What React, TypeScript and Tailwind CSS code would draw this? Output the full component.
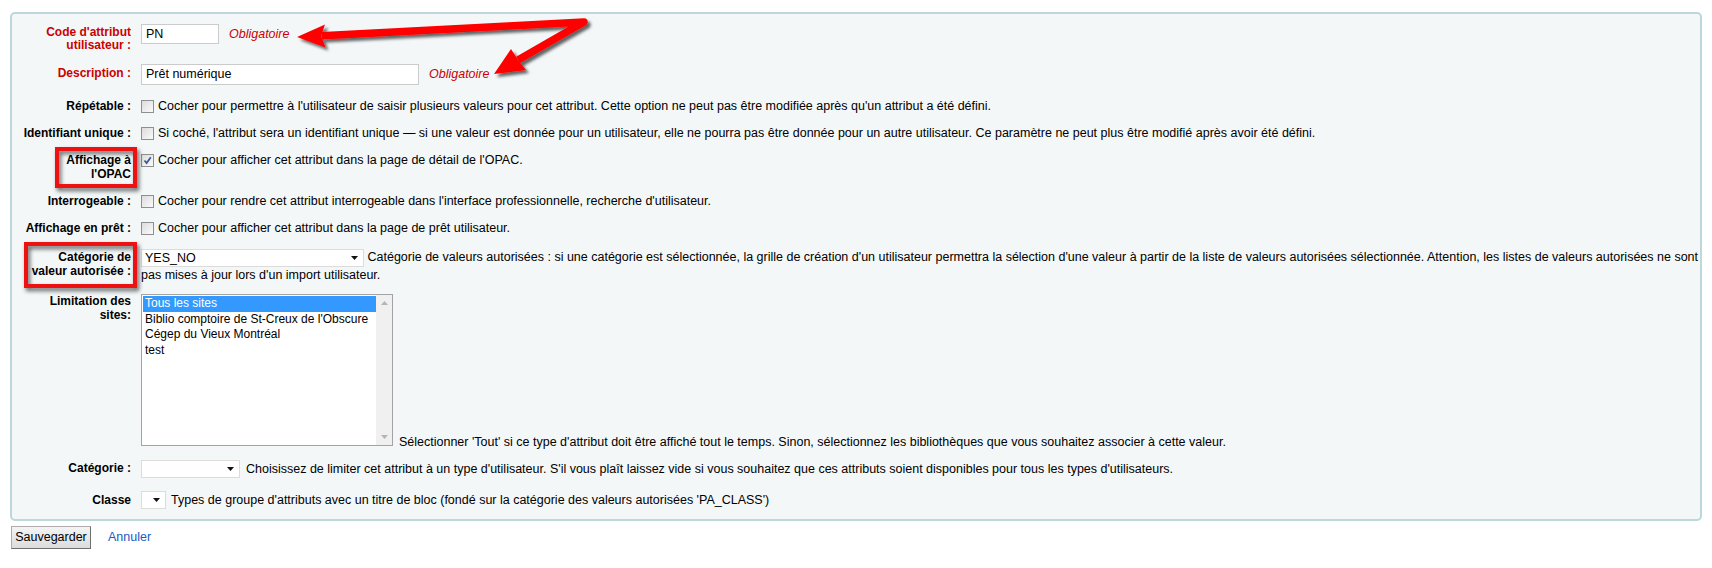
import React from 'react';

const Checkbox = ({ checked = false }: { checked?: boolean }) => (
  <span className="mr-[4px] mt-[1px] inline-flex h-[13px] w-[13px] shrink-0 items-center justify-center border border-[#8f8f8f] bg-gradient-to-br from-[#dcdcdc] to-[#fbfbfb]">
    {checked && (
      <svg width="11" height="11" viewBox="0 0 11 11">
        <path d="M2.5 5.5 L4.6 8 L8.8 2.2" fill="none" stroke="#3b5598" strokeWidth="1.7" />
      </svg>
    )}
  </span>
);

const Caret = () => (
  <svg width="7" height="4" viewBox="0 0 7 4" className="shrink-0">
    <path d="M0 0 H7 L3.5 4 Z" fill="#111" />
  </svg>
);

const FakeSelect = ({ value, width }: { value?: string; width: string }) => (
  <span
    className={`inline-flex h-[18px] items-center justify-between border border-[#dcdcdc] bg-white pl-[3px] pr-[5px] align-middle leading-[16px] text-black ${width}`}
  >
    <span>{value}</span>
    <Caret />
  </span>
);

const Label = ({ children, required = false, pt = 'pt-[2px]' }: { children: React.ReactNode; required?: boolean; pt?: string }) => (
  <label
    className={`mr-[10px] w-[108px] shrink-0 whitespace-nowrap text-right text-[12px] font-bold leading-[14px] ${pt} ${required ? 'text-[#cc0000]' : 'text-black'}`}
  >
    {children}
  </label>
);

const CheckRow = ({ label, text, checked = false }: { label: React.ReactNode; text: string; checked?: boolean }) => (
  <li className="flex pb-[11px]">
    <Label>{label}</Label>
    <div className="flex items-start pt-[2px] leading-[14px]">
      <Checkbox checked={checked} />
      <span>{text}</span>
    </div>
  </li>
);

const sites = ['Tous les sites', "Biblio comptoire de St-Creux de l'Obscure", 'Cégep du Vieux Montréal', 'test'];

export default function App() {
  return (
    <div className="relative h-[568px] w-[1712px] overflow-hidden bg-white font-['Liberation_Sans',Arial,sans-serif] text-[12.5px] text-black">
      <div className="px-[10px] pt-[12px]">
        <fieldset className="rounded-[5px] border-2 border-[#bcd8da] bg-[#f3f7f8] pl-[11px] pr-[12px] pt-[10px]">
          <ol className="list-none">
            <li className="flex pb-[12px]">
              <label className="mr-[10px] w-[108px] shrink-0 whitespace-nowrap pt-[2px] text-right text-[12px] font-bold leading-[13px] text-[#cc0000]">
                Code d'attribut
                <br />
                utilisateur :
              </label>
              <div className="flex items-center self-start">
                <span className="flex h-[20px] w-[78px] items-center border border-[#cbcbcb] bg-white pl-[4px]">PN</span>
                <span className="ml-[10px] italic text-[#cc0000]">Obligatoire</span>
              </div>
            </li>
            <li className="flex pb-[12px]">
              <Label required>Description :</Label>
              <div className="flex items-center self-start">
                <span className="flex h-[21px] w-[278px] items-center border border-[#cbcbcb] bg-white pl-[4px]">Prêt numérique</span>
                <span className="ml-[10px] italic text-[#cc0000]">Obligatoire</span>
              </div>
            </li>
            <CheckRow
              label="Répétable :"
              text="Cocher pour permettre à l'utilisateur de saisir plusieurs valeurs pour cet attribut. Cette option ne peut pas être modifiée après qu'un attribut a été défini."
            />
            <CheckRow
              label="Identifiant unique :"
              text="Si coché, l'attribut sera un identifiant unique — si une valeur est donnée pour un utilisateur, elle ne pourra pas être donnée pour un autre utilisateur. Ce paramètre ne peut plus être modifié après avoir été défini."
            />
            <CheckRow
              label={
                <>
                  Affichage à
                  <br />
                  l'OPAC
                </>
              }
              text="Cocher pour afficher cet attribut dans la page de détail de l'OPAC."
              checked
            />
            <CheckRow
              label="Interrogeable :"
              text="Cocher pour rendre cet attribut interrogeable dans l'interface professionnelle, recherche d'utilisateur."
            />
            <CheckRow
              label="Affichage en prêt :"
              text="Cocher pour afficher cet attribut dans la page de prêt utilisateur."
            />
            <li className="flex pb-[8px]">
              <Label pt="pt-[4px]">
                Catégorie de
                <br />
                valeur autorisée :
              </Label>
              <div className="mr-[-12px] flex-1 pt-[3px] leading-[17px]">
                <FakeSelect value="YES_NO" width="w-[223px]" />{' '}
                Catégorie de valeurs autorisées : si une catégorie est sélectionnée, la grille de création d'un utilisateur permettra la sélection d'une valeur à partir de la liste de valeurs autorisées sélectionnée. Attention, les listes de valeurs autorisées ne sont
                <br />
                pas mises à jour lors d'un import utilisateur.
              </div>
            </li>
            <li className="flex pb-[11px]">
              <Label>
                Limitation des
                <br />
                sites:
              </Label>
              <div className="flex items-end pt-[2px]">
                <div className="flex h-[152px] w-[252px] border border-[#a3a3a3] bg-white">
                  <div className="flex-1 whitespace-nowrap pl-[1px] pt-[1px] text-[12px] leading-[15.5px]">
                    {sites.map((s, i) => (
                      <div key={s} className={i === 0 ? 'bg-[#3399ff] pl-[2px] text-white' : 'pl-[2px]'}>
                        {s}
                      </div>
                    ))}
                  </div>
                  <div className="flex w-[16px] flex-col items-center justify-between bg-[#f0f0f0] py-[6px]">
                    <svg width="7" height="4" viewBox="0 0 7 4">
                      <path d="M0 4 H7 L3.5 0 Z" fill="#b5b5b5" />
                    </svg>
                    <svg width="7" height="4" viewBox="0 0 7 4">
                      <path d="M0 0 H7 L3.5 4 Z" fill="#b5b5b5" />
                    </svg>
                  </div>
                </div>
                <span className="mb-[-3px] ml-[6px] leading-[14px]">
                  Sélectionner 'Tout' si ce type d'attribut doit être affiché tout le temps. Sinon, sélectionnez les bibliothèques que vous souhaitez associer à cette valeur.
                </span>
              </div>
            </li>
            <li className="flex pb-[11px]">
              <Label pt="pt-[4px]">Catégorie :</Label>
              <div className="flex items-center pt-[3px]">
                <FakeSelect width="w-[99px]" />
                <span className="ml-[6px]">
                  Choisissez de limiter cet attribut à un type d'utilisateur. S'il vous plaît laissez vide si vous souhaitez que ces attributs soient disponibles pour tous les types d'utilisateurs.
                </span>
              </div>
            </li>
            <li className="flex pb-[9px]">
              <Label pt="pt-[3px]">Classe</Label>
              <div className="flex items-center pt-[1px]">
                <FakeSelect width="w-[25px]" />
                <span className="ml-[5px]">
                  Types de groupe d'attributs avec un titre de bloc (fondé sur la catégorie des valeurs autorisées 'PA_CLASS')
                </span>
              </div>
            </li>
          </ol>
        </fieldset>
      </div>

      <div className="mt-[5px] flex items-center pl-[11px]">
        <button className="h-[23px] w-[80px] border border-[#acacac] border-b-[#707070] border-r-[#707070] bg-gradient-to-b from-[#f4f4f4] to-[#dcdcdc] text-[12.5px] text-black">
          Sauvegarder
        </button>
        <a className="ml-[17px] text-[#1a5cbf]">Annuler</a>
      </div>

      {/* annotations drawn over the screenshot */}
      <div className="pointer-events-none absolute inset-0">
        <div className="absolute left-[55px] top-[147px] h-[41px] w-[82px] border-4 border-[#ee1111] [filter:drop-shadow(2px_3px_2px_rgba(0,0,0,0.6))]" />
        <div className="absolute left-[24px] top-[242px] h-[46px] w-[113px] border-4 border-[#ee1111] [filter:drop-shadow(2px_3px_2px_rgba(0,0,0,0.6))]" />
        <svg width="1712" height="568" className="absolute left-0 top-0">
          <defs>
            <filter id="sh" x="-10%" y="-50%" width="120%" height="200%">
              <feDropShadow dx="3" dy="3" stdDeviation="1.6" floodColor="#000" floodOpacity="0.6" />
            </filter>
          </defs>
          <g filter="url(#sh)" fill="#ff0000">
            <path d="M322 35.8 L584 22 L518 60" fill="none" stroke="#ff0000" strokeWidth="7.5" strokeLinejoin="round" />
            <polygon points="297,37 325,24.6 321,36 325.5,47.6" />
            <polygon points="494,74 511,49 518,60 526,70" />
          </g>
        </svg>
      </div>
    </div>
  );
}
